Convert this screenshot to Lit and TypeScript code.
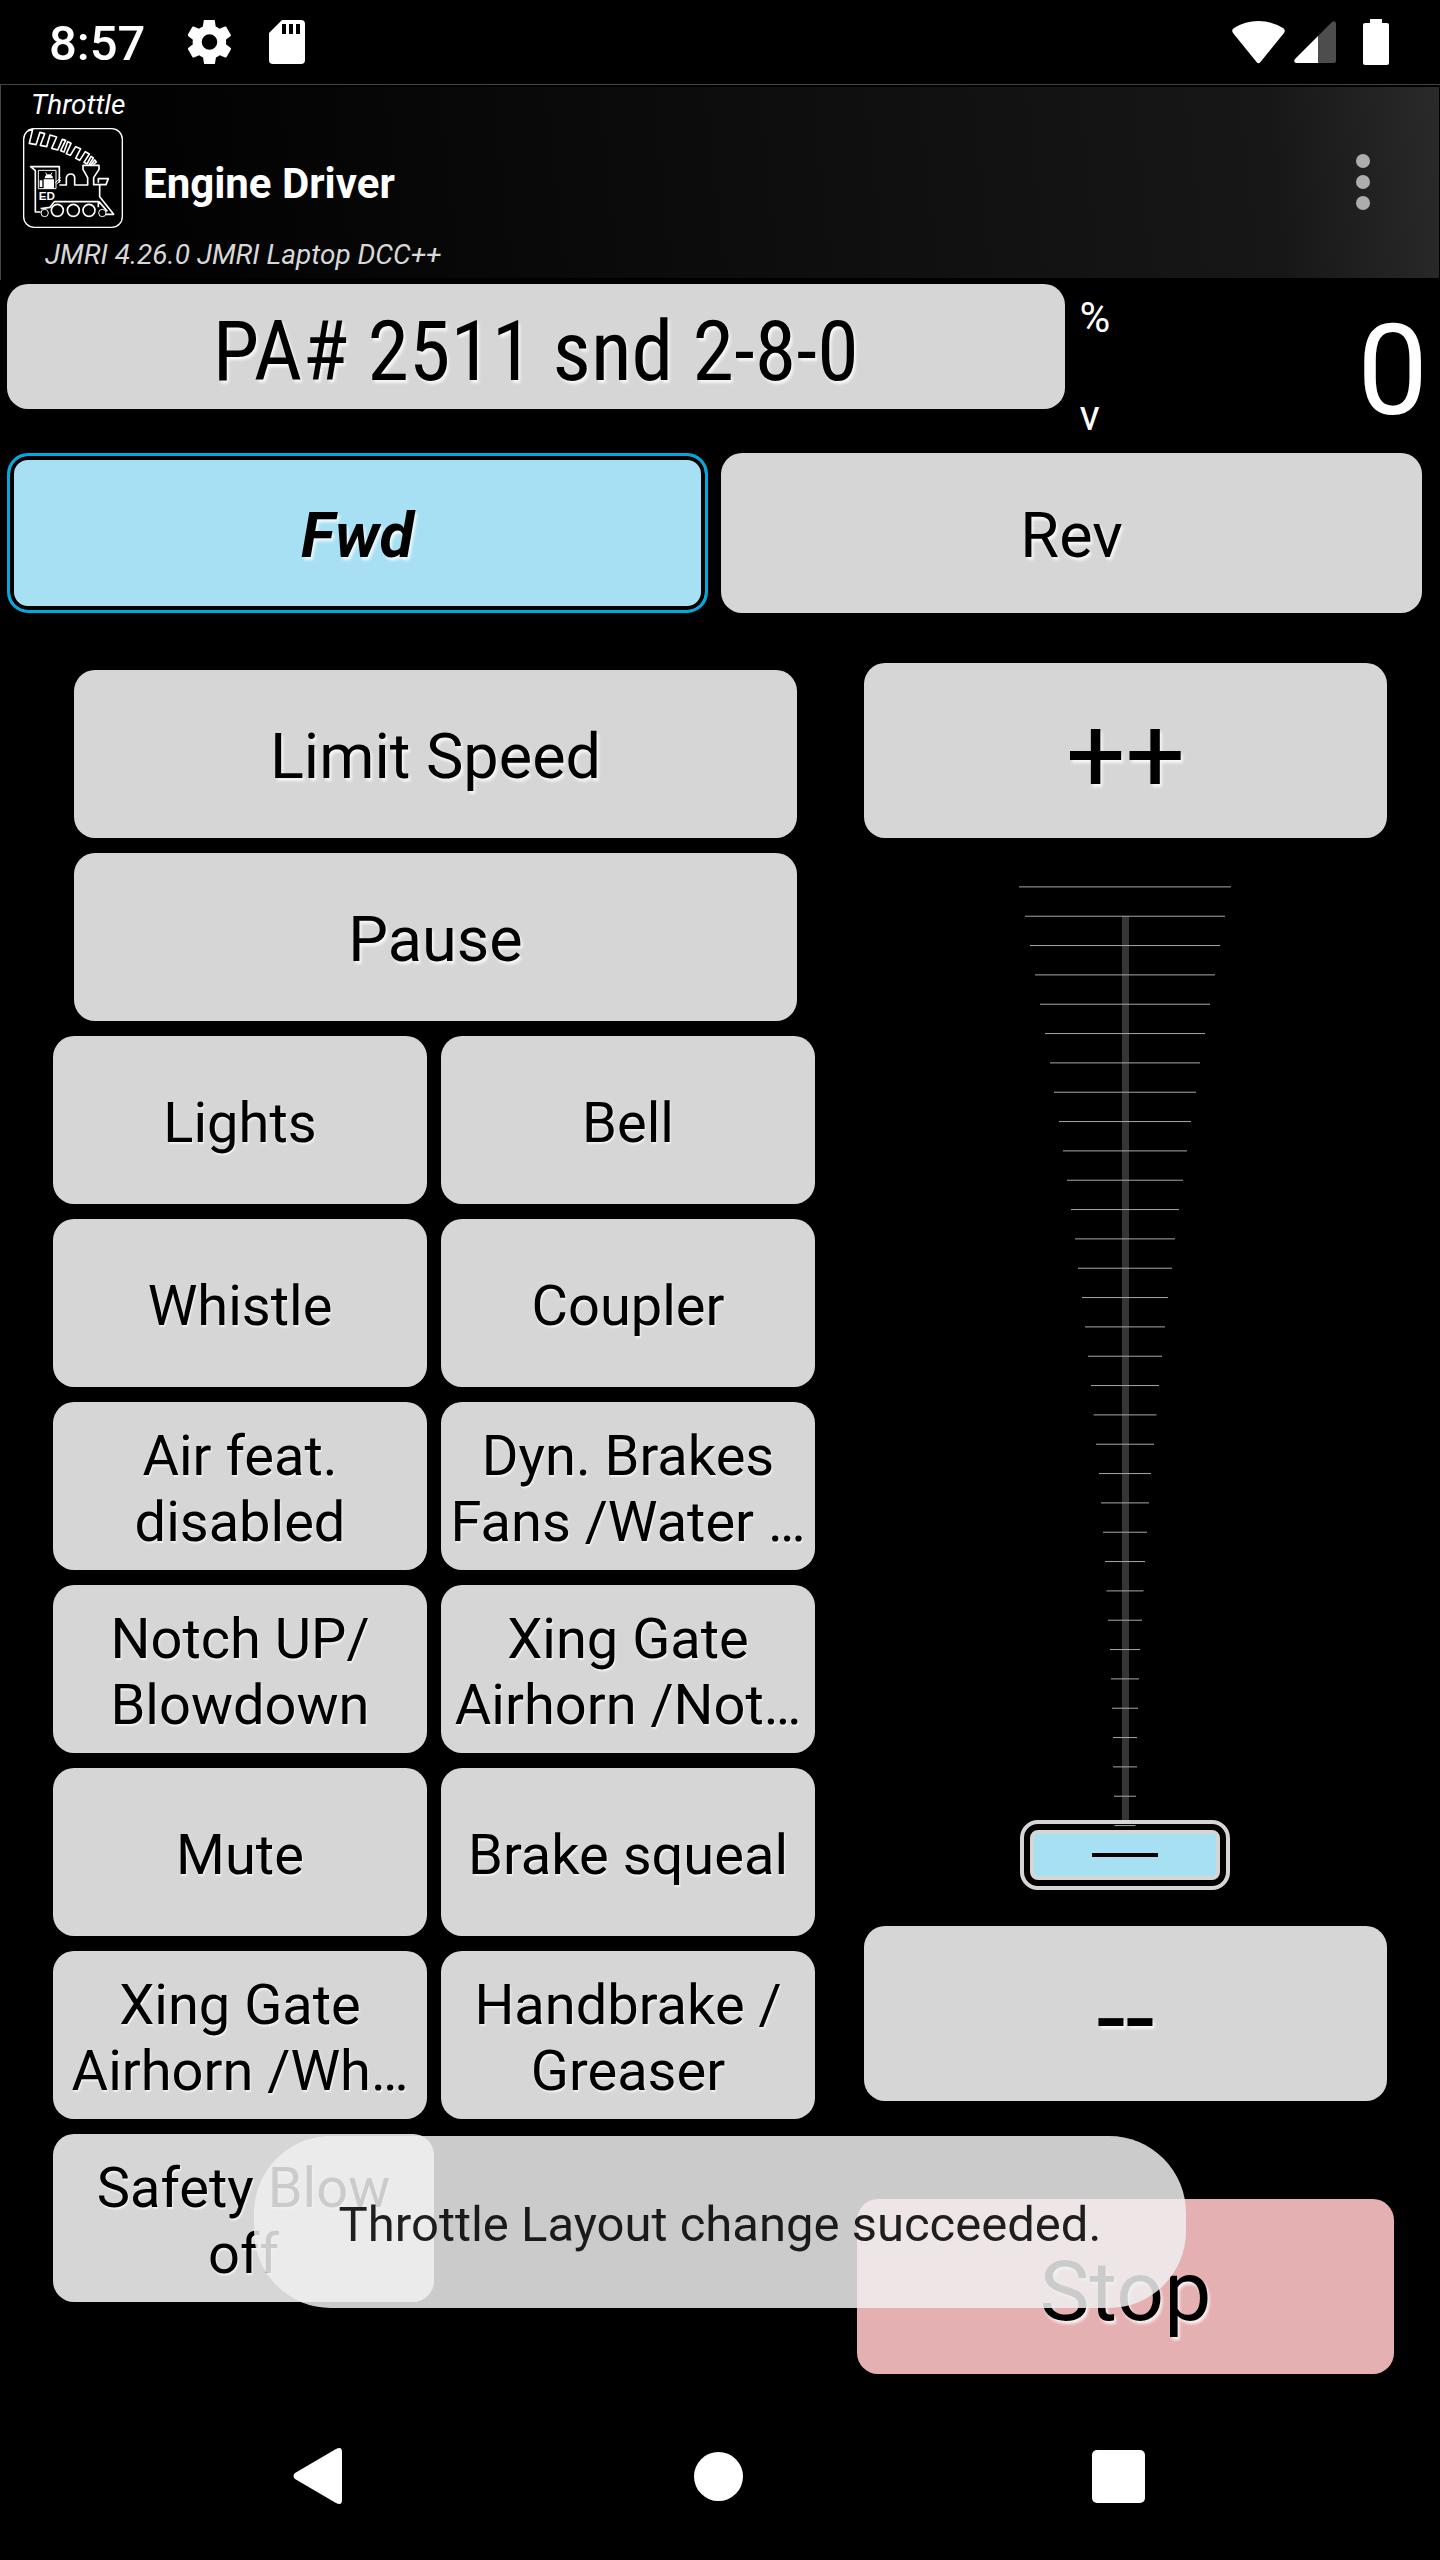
import { LitElement, html, svg, css } from "lit";
import { customElement, state } from "lit/decorators.js";

const FUNCTIONS = [
  "Lights",
  "Bell",
  "Whistle",
  "Coupler",
  "Air feat. disabled",
  "Dyn. Brakes Fans /Water …",
  "Notch UP/ Blowdown",
  "Xing Gate Airhorn /Not…",
  "Mute",
  "Brake squeal",
  "Xing Gate Airhorn /Wh…",
  "Handbrake / Greaser",
  "Safety Blow off",
];

/** Width of each tick on the speed scale, from full speed down to zero. */
const TICKS = [
  212, 200, 190, 180, 170, 160, 150, 142, 132, 124, 116, 108, 100, 94, 86, 80,
  74, 68, 63, 58, 52, 48, 44, 40, 37, 34, 30, 28, 26, 24, 24, 22, 21,
];

@customElement("status-bar")
export class StatusBar extends LitElement {
  static styles = css`
    :host {
      display: flex;
      align-items: center;
      height: 84px;
      padding: 0 51px 0 49px;
      color: #fff;
      box-sizing: border-box;
    }
    .time {
      font-size: 49px;
      line-height: 58px;
      font-weight: 500;
      padding-top: 4px;
      margin-right: 43px;
    }
    svg {
      display: block;
      fill: currentColor;
    }
    .gear {
      margin-right: 38px;
    }
    .wifi {
      margin-left: auto;
      margin-right: 9px;
    }
    .cell {
      margin-right: 27px;
    }
    .dim {
      fill: #4d4d4d;
    }
    .slot {
      fill: #000;
    }
  `;

  render() {
    return html`
      <span class="time">8:57</span>
      <svg class="gear" width="43" height="44" viewBox="2.3 2.2 19.4 19.6" aria-hidden="true">
        <path
          d="M19.4 13c.1-.3.1-.7.1-1s0-.7-.1-1l2.1-1.7c.2-.1.2-.4.1-.6l-2-3.5c-.1-.2-.4-.3-.6-.2l-2.5 1c-.5-.4-1.1-.7-1.7-1l-.4-2.6c0-.2-.2-.4-.5-.4h-4c-.2 0-.5.2-.5.4L9 5c-.6.2-1.2.6-1.7 1l-2.5-1c-.2-.1-.5 0-.6.2l-2 3.5c-.1.2-.1.5.1.6L4.5 11c0 .3-.1.6-.1 1s0 .7.1 1l-2.100 1.700c-.2.1-.2.4-.1.6l2 3.500c.1.2.4.3.6.2l2.500-1c.5.4 1.100.7 1.700 1l.4 2.600c0 .2.2.4.5.4h4c.2 0 .5-.2.5-.4l.4-2.600c.6-.2 1.200-.6 1.700-1l2.500 1c.2.1.5 0 .6-.2l2-3.500c.1-.2.1-.5-.1-.6L19.400 13zM12 15.500a3.500 3.500 0 1 1 0-7 3.500 3.500 0 0 1 0 7z"
        />
      </svg>
      <svg width="36" height="44" viewBox="0 0 36 44" aria-hidden="true">
        <path d="M13 0H32a4 4 0 0 1 4 4V40a4 4 0 0 1-4 4H4a4 4 0 0 1-4-4V13Z" />
        <path class="slot" d="M13 4h4v10h-4zM20 4h4v10h-4zM27 4h4v10h-4z" />
      </svg>
      <svg class="wifi" width="53" height="43" viewBox="0 0 53 43" aria-hidden="true">
        <path
          d="M1 12Q-1 9 2 7Q13 0 26.500 0Q40 0 51 7Q54 9 52 12L28.500 41Q26.500 43.500 24.500 41Z"
        />
      </svg>
      <svg class="cell" width="42" height="42" viewBox="0 0 42 42" aria-hidden="true">
        <path class="dim" d="M38 1Q42 -1 42 3V40Q42 42 40 42H24V15Z" />
        <path d="M24 15V42H2Q-1 41 1 38Z" />
      </svg>
      <svg width="26" height="46" viewBox="0 0 26 46" aria-hidden="true">
        <path d="M7 0H19V4H24Q26 4 26 6V44Q26 46 24 46H2Q0 46 0 44V6Q0 4 2 4H7Z" />
      </svg>
    `;
  }
}

@customElement("engine-logo")
export class EngineLogo extends LitElement {
  static styles = css`
    :host {
      display: block;
    }
    svg {
      display: block;
      fill: none;
      stroke: #fff;
      stroke-width: 5;
      stroke-linejoin: round;
    }
    .frame {
      stroke-width: 4;
    }
    .solid {
      fill: #fff;
      stroke: none;
    }
    .thin {
      stroke-width: 3;
    }
    .mark {
      fill: #fff;
      stroke: none;
      font-family: "Liberation Sans", sans-serif;
      font-size: 35px;
      font-weight: 700;
    }
  `;

  render() {
    return html`
      <svg width="100" height="100" viewBox="69 384 300 300" aria-hidden="true">
        <rect class="frame" x="71" y="386" width="296" height="296" rx="32" />
        <path
          d="M84 392L98 388L88 430L108 434L120 397L134 401L121 436L140 440L150 405L170 411L155 445L173 450L187 418L197 421L182 452L192 456L203 425L213 430L199 461L211 466L227 440L242 446L227 475L239 481L256 455L268 462L252 487L261 492L273 469L280 474L268 493L273 495L284 480L289 486L280 494"
        />
        <path
          d="M178 548V500H92L106 512V636H122M122 626L150 622L163 605H295V622M178 555H199V533Q202 522 212 522Q223 522 224 533V555H263V533L249 508V496H297V508L281 533V554H299V590L341 643H318M295 548V536H325L318 554H299M297 605L322 634"
        />
        <path class="thin" d="M115 511H168V566H115Z M166 548L182 533M170 552L182 541" />
        <path
          class="solid"
          d="M131 538H162V566H131ZM134 535Q135 524 146 523Q158 524 159 535ZM119 541H127V561H119Z"
        />
        <path class="thin" d="M137 518L141 525M156 518L152 525" />
        <circle cx="172" cy="631" r="18" />
        <circle cx="220" cy="631" r="18" />
        <circle cx="267" cy="631" r="18" />
        <circle class="thin" cx="134" cy="639" r="11" />
        <circle class="thin" cx="307" cy="639" r="11" />
        <text class="mark" x="116" y="600">ED</text>
      </svg>
    `;
  }
}

@customElement("app-root")
export class AppRoot extends LitElement {
  static styles = css`
    :host {
      display: flex;
      flex-direction: column;
      position: relative;
      min-height: 100vh;
      background: #000;
      color: #fff;
      font-family: Roboto, "Liberation Sans", sans-serif;
    }
    button {
      margin: 0;
      border: 0;
      font: inherit;
      color: #000;
      cursor: pointer;
    }
    svg {
      display: block;
    }

    .app-bar {
      border-top: 1px solid #444;
      border-left: 1px solid #444;
      padding: 3px 0 9px;
      background: linear-gradient(84deg, #000 4%, #171717 88%, #2a2a2a)
        no-repeat 0 2px / calc(100% - 1px) calc(100% - 4px);
    }
    .screen,
    .server {
      margin: 0;
      font-size: 28px;
      line-height: 33px;
      font-style: italic;
      font-weight: 400;
    }
    .screen {
      padding-left: 30px;
    }
    .server {
      padding-left: 44px;
      color: #d8d8d8;
    }
    .brand {
      display: flex;
      align-items: center;
      padding: 7px 56px 10px 22px;
    }
    .brand h1 {
      flex: 1;
      margin: 0;
      padding: 10px 0 0 20px;
      font-size: 42px;
      line-height: 49px;
      font-weight: 700;
    }
    .more {
      display: flex;
      flex-direction: column;
      gap: 7px;
      padding: 22px 14px 14px;
      background: none;
    }
    .more span {
      width: 14px;
      height: 14px;
      border-radius: 50%;
      background: #adadad;
    }

    .key {
      display: flex;
      align-items: center;
      justify-content: center;
      text-align: center;
      padding: 6px 6px 0;
      border-radius: 21px;
      background: #d6d6d6;
      text-shadow: 2px 3px 3px rgba(255, 255, 255, 0.8);
      font-size: 63px;
      line-height: 74px;
    }

    .loco {
      display: grid;
      grid-template-columns: 3fr 1fr;
      gap: 15px;
      align-items: start;
      height: 169px;
      padding: 4px 8px 0 7px;
    }
    .name {
      height: 125px;
      padding-top: 10px;
      font-family: "Roboto Condensed", Roboto, "Liberation Sans", sans-serif;
      font-size: 84px;
      line-height: 98px;
    }
    .readout {
      display: flex;
      justify-content: space-between;
    }
    .units {
      display: flex;
      flex-direction: column;
      gap: 49px;
      padding-top: 9px;
      font-size: 42px;
      line-height: 49px;
    }
    .speed {
      padding: 13px 4px 0 0;
      font-size: 126px;
      line-height: 148px;
    }

    .direction {
      display: grid;
      grid-template-columns: 1fr 1fr;
      gap: 13px;
      padding: 0 18px 0 7px;
    }
    .direction .key {
      height: 160px;
    }
    .direction .active {
      border: 3px solid #00aade;
      background: #a7e0f3;
      box-shadow: inset 0 0 0 4px #000;
      font-weight: 700;
      font-style: italic;
    }

    .controls {
      display: grid;
      grid-template-columns: 762fr 537fr;
      gap: 42px;
      padding: 50px 46px 18px 53px;
    }
    .pads {
      display: flex;
      flex-direction: column;
      gap: 15px;
      padding-top: 7px;
    }
    .pads .key {
      height: 168px;
    }
    .wide {
      margin: 0 18px 0 21px;
    }
    .functions {
      display: grid;
      grid-template-columns: 1fr 1fr;
      gap: 15px 14px;
    }
    .functions .key {
      font-size: 56px;
      line-height: 66px;
      text-shadow: 1px 2px 2px rgba(255, 255, 255, 0.7);
    }
    .functions .key:last-child:nth-child(odd) {
      margin-right: -7px;
    }

    .throttle {
      display: flex;
      flex-direction: column;
    }
    .throttle .key {
      height: 175px;
      padding-top: 10px;
    }
    .throttle .step {
      margin: 0 7px;
      font-size: 105px;
      line-height: 123px;
    }
    .throttle .stop {
      margin-top: 98px;
      background: #e4b0b2;
      font-size: 84px;
      line-height: 98px;
    }
    .scale {
      display: grid;
      align-self: center;
      width: 211px;
      height: 1088px;
    }
    .scale > * {
      grid-area: 1 / 1;
    }
    .scale svg {
      overflow: visible;
    }
    .track {
      fill: #353535;
    }
    .tick {
      stroke: #a8a8a8;
      stroke-width: 1;
    }
    .slider {
      appearance: none;
      -webkit-appearance: none;
      writing-mode: vertical-lr;
      direction: rtl;
      width: 210px;
      height: 1010px;
      margin: 32px 0 46px;
      padding: 0;
      background: none;
      outline: none;
    }
    .slider::-webkit-slider-runnable-track {
      width: 210px;
      background: none;
    }
    .slider::-webkit-slider-thumb {
      appearance: none;
      -webkit-appearance: none;
      box-sizing: border-box;
      width: 190px;
      height: 50px;
      margin: 0 10px;
      border: 4px solid #d6d6d6;
      border-radius: 8px;
      outline: 4px solid #d6d6d6;
      outline-offset: 6px;
      background: linear-gradient(#000, #000) no-repeat center / 66px 4px #a7e0f3;
    }

    .toast {
      position: absolute;
      bottom: 252px;
      left: 0;
      right: 0;
      width: fit-content;
      margin: 0 auto;
      padding: 60px 85px 54px;
      border-radius: 77px;
      background: rgba(238, 238, 238, 0.85);
      color: rgba(0, 0, 0, 0.87);
      font-size: 49px;
      line-height: 58px;
    }

    .nav {
      display: grid;
      grid-template-columns: repeat(3, 1fr);
      height: 168px;
      margin-top: auto;
      padding: 0 122px 0 118px;
    }
    .nav button {
      display: flex;
      align-items: center;
      justify-content: center;
      padding: 0;
      background: none;
    }
    .nav svg {
      fill: #fff;
    }
  `;

  @state() private forward = true;
  @state() private speed = 0;

  private setSpeed(value: number) {
    this.speed = Math.max(0, Math.min(126, value));
  }

  private dirKey(label: string, forward: boolean) {
    const active = this.forward === forward;
    return html`<button
      class="key ${active ? "active" : ""}"
      aria-pressed=${active}
      @click=${() => (this.forward = forward)}
    >
      ${label}
    </button>`;
  }

  render() {
    return html`
      <status-bar></status-bar>
      <header class="app-bar">
        <p class="screen">Throttle</p>
        <div class="brand">
          <engine-logo></engine-logo>
          <h1>Engine Driver</h1>
          <button class="more" aria-label="More options">
            <span></span><span></span><span></span>
          </button>
        </div>
        <p class="server">JMRI 4.26.0 JMRI Laptop DCC++</p>
      </header>

      <section class="loco">
        <button class="key name">PA# 2511 snd 2-8-0</button>
        <div class="readout">
          <div class="units"><span>%</span><span>v</span></div>
          <output class="speed">${this.speed}</output>
        </div>
      </section>

      <section class="direction">
        ${this.dirKey("Fwd", true)}${this.dirKey("Rev", false)}
      </section>

      <main class="controls">
        <div class="pads">
          <button class="key wide">Limit Speed</button>
          <button class="key wide">Pause</button>
          <div class="functions">
            ${FUNCTIONS.map((name) => html`<button class="key">${name}</button>`)}
          </div>
        </div>
        <div class="throttle">
          <button class="key step" @click=${() => this.setSpeed(this.speed + 1)}>++</button>
          <div class="scale">
            <svg width="211" height="1088" viewBox="0 0 211 1088" aria-hidden="true">
              <rect class="track" x="102" y="78" width="7" height="904" />
              ${TICKS.map((w, i) => {
                const y = 48.9 + (i * 88) / 3;
                return svg`<line class="tick" x1=${105 - w / 2} x2=${105 + w / 2} y1=${y} y2=${y} />`;
              })}
            </svg>
            <input
              class="slider"
              type="range"
              min="0"
              max="126"
              aria-label="Speed"
              .value=${String(this.speed)}
              @input=${(e: Event) => this.setSpeed(Number((e.target as HTMLInputElement).value))}
            />
          </div>
          <button class="key step" @click=${() => this.setSpeed(this.speed - 1)}>--</button>
          <button class="key stop" @click=${() => this.setSpeed(0)}>Stop</button>
        </div>
      </main>

      <nav class="nav">
        <button aria-label="Back">
          <svg width="50" height="56" viewBox="0 0 50 56">
            <path d="M43 1Q49 -2 49 4V52Q49 58 43 55L2 31Q-1 28 2 25Z" />
          </svg>
        </button>
        <button aria-label="Home">
          <svg width="49" height="49" viewBox="0 0 49 49">
            <circle cx="24.5" cy="24.5" r="24.5" />
          </svg>
        </button>
        <button aria-label="Overview">
          <svg width="53" height="53" viewBox="0 0 53 53">
            <rect width="53" height="53" rx="5" />
          </svg>
        </button>
      </nav>

      <div class="toast" role="status">Throttle Layout change succeeded.</div>
    `;
  }
}
